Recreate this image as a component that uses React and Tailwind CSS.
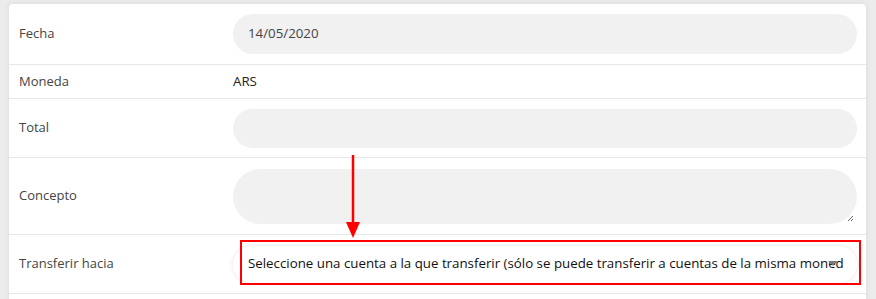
import React from "react";

function Row({ label, children, className = "" }) {
  return (
    <div className={`flex items-center border-b border-[#e8e8e8] ${className}`}>
      <div className="w-[224px] shrink-0 pl-[10px] text-[13px] text-[#444]">{label}</div>
      <div className="flex-1 min-w-0 pr-[9px]">{children}</div>
    </div>
  );
}

export default function App() {
  return (
    <div
      className="w-[876px] h-[299px] overflow-hidden bg-[#ececed] pt-[4px] pl-[9px] pr-[10px]"
      style={{ fontFamily: '"Open Sans", "Noto Sans", sans-serif' }}
    >
      <div className="relative h-[400px] bg-white rounded-t-[4px] shadow-[0_0_6px_rgba(0,0,0,0.08)]">
        <Row label="Fecha" className="h-[61px]">
          <div className="h-[40px] rounded-full bg-[#f1f1f1] flex items-center pl-[15px] text-[13.3px] text-[#444]">
            14/05/2020
          </div>
        </Row>
        <Row label="Moneda" className="h-[34px]">
          <div className="text-[13.3px] text-[#222]">ARS</div>
        </Row>
        <Row label="Total" className="h-[59px]">
          <div className="h-[39px] rounded-full bg-[#f1f1f1]" />
        </Row>
        <Row label="Concepto" className="h-[77px]">
          <div className="relative h-[55px] rounded-[28px] bg-[#f1f1f1]">
            <svg className="absolute right-[3px] bottom-[2px]" width="7" height="7" viewBox="0 0 7 7">
              <path d="M1 6 L6 1 M4 6 L6 4" stroke="#666" strokeWidth="1" />
            </svg>
          </div>
        </Row>
        <Row label="Transferir hacia" className="h-[59px]">
          <div className="relative h-[37px] rounded-full bg-white shadow-[0_0_4px_rgba(0,0,0,0.12)] flex items-center pl-[15px] pr-[14px]">
            <div className="flex-1 min-w-0 overflow-hidden whitespace-nowrap text-[13.3px] text-[#111]">
              Seleccione una cuenta a la que transferir (sólo se puede transferir a cuentas de la misma moneda)
            </div>
            <div className="absolute right-[19px] top-[15px] w-0 h-0 border-l-[5px] border-r-[5px] border-t-[5px] border-l-transparent border-r-transparent border-t-[#777]" />
          </div>
        </Row>
        <div className="absolute left-[231px] top-[236px] w-[621px] h-[45px] border-2 border-[#ff0000]" />
        <svg className="absolute left-[335px] top-[150px]" width="20" height="88" viewBox="0 0 20 88">
          <line x1="9" y1="1" x2="9" y2="70" stroke="#ff0000" strokeWidth="2.5" />
          <polygon points="2,68 16,68 9,84" fill="#ff0000" />
        </svg>
      </div>
    </div>
  );
}
